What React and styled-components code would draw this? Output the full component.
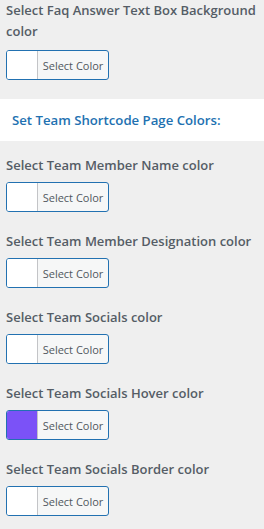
import React from "react";
import styled, { createGlobalStyle } from "styled-components";

const Global = createGlobalStyle`
  html, body { margin: 0; padding: 0; background: #efefef; }
  body { font-family: "Open Sans", "Noto Sans", sans-serif; }
`;

const Page = styled.div`
  width: 264px;
  display: flex;
  flex-direction: column;
`;

const Field = styled.div`
  display: flex;
  flex-direction: column;
  align-items: flex-start;
  padding: 0 4px 0 6px;
  margin-top: ${(p) => p.$top || 0}px;
`;

const Label = styled.div`
  font-size: 13px;
  font-weight: 600;
  line-height: 21px;
  color: #555d66;
`;

const ColorButton = styled.button`
  display: flex;
  align-items: stretch;
  margin-top: ${(p) => p.$gap}px;
  padding: 0;
  width: 103px;
  height: 30px;
  border: 1px solid #2271b1;
  border-radius: 3px;
  background: #f6f7f7;
  overflow: hidden;
  cursor: pointer;
`;

const Swatch = styled.span`
  width: 30px;
  flex: none;
  background: ${(p) => p.$color};
  border-right: 1px solid #c3c4c7;
`;

const ButtonText = styled.span`
  flex: 1;
  display: flex;
  align-items: center;
  justify-content: center;
  font-family: "Open Sans", "Noto Sans", sans-serif;
  font-size: 11px;
  color: #50575e;
`;

const SectionBand = styled.div`
  margin-top: 19px;
  background: #ffffff;
  height: 42px;
  padding: 0 12px;
  display: flex;
  align-items: center;
`;

const SectionTitle = styled.h3`
  margin: 0;
  font-size: 13.2px;
  font-weight: 600;
  line-height: 21px;
  color: #2271b1;
`;

const ColorField = ({ label, color = "#ffffff", gap = 6, top = 0 }) => (
  <Field $top={top}>
    <Label>{label}</Label>
    <ColorButton type="button" $gap={gap}>
      <Swatch $color={color} />
      <ButtonText>Select Color</ButtonText>
    </ColorButton>
  </Field>
);

const fields = [
  { label: "Select Team Member Name color", top: 14 },
  { label: "Select Team Member Designation color", top: 19 },
  { label: "Select Team Socials color", top: 19 },
  { label: "Select Team Socials Hover color", color: "#7b52f7", top: 19 },
  { label: "Select Team Socials Border color", top: 19 },
];

export default function App() {
  return (
    <>
      <Global />
      <Page>
        <ColorField label="Select Faq Answer Text Box Background color" gap={8} />
        <SectionBand>
          <SectionTitle>Set Team Shortcode Page Colors:</SectionTitle>
        </SectionBand>
        {fields.map((f) => (
          <ColorField key={f.label} {...f} />
        ))}
      </Page>
    </>
  );
}
